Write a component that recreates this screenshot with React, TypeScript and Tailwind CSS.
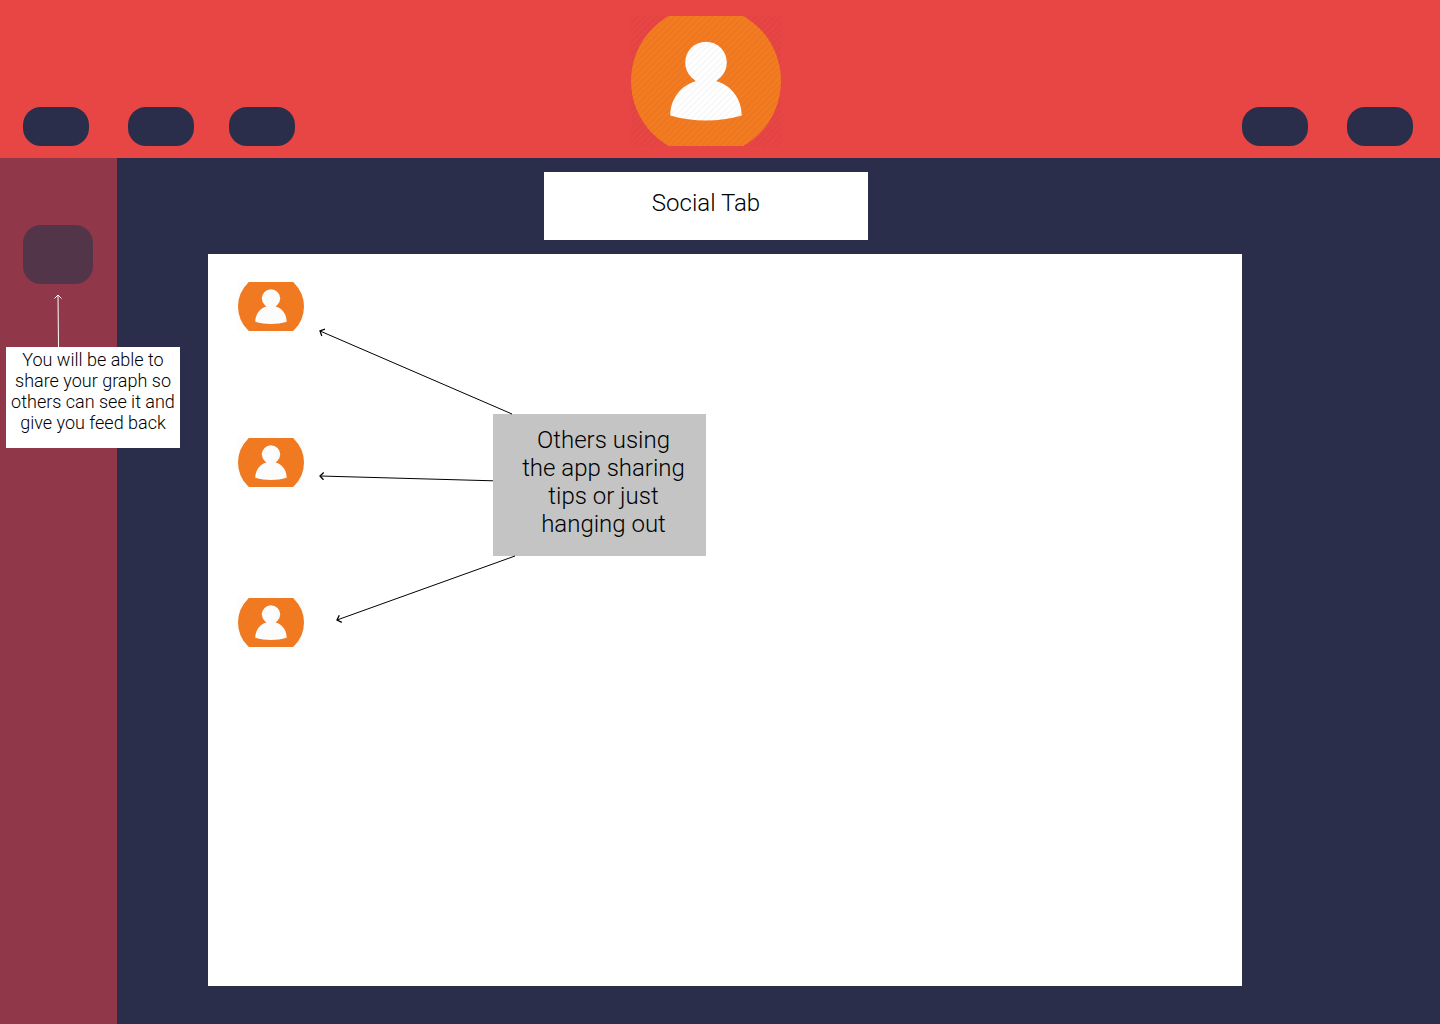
import { useId } from "react";

function Avatar({ className, label }: { className: string; label: string }) {
  const id = useId();
  return (
    <svg
      viewBox="0 0 150 130"
      preserveAspectRatio="xMidYMid slice"
      className={className}
      role="img"
      aria-label={label}
    >
      <defs>
        <pattern
          id={id}
          width="4.4"
          height="4.4"
          patternUnits="userSpaceOnUse"
          patternTransform="rotate(45)"
        >
          <rect width="1.6" height="4.4" fill="#000" fillOpacity="0.03" />
        </pattern>
      </defs>
      <circle cx="75" cy="65" r="75" fill="#f37b21" />
      <circle cx="75" cy="46.5" r="20.8" fill="#fff" />
      <path
        d="M39.3 99.5C39.3 83 50 69 64.8 65.2C63 63 62 62 61 61H89C88 62 87 63 85.4 65.2C100.3 69 110.7 83 110.7 99.5C99 103 87 104.5 75 104.5C63 104.5 51 103 39.3 99.5Z"
        fill="#fff"
      />
      <rect width="150" height="130" fill={`url(#${id})`} />
    </svg>
  );
}

function Pill({ label, className = "" }: { label: string; className?: string }) {
  return (
    <button
      type="button"
      aria-label={label}
      className={`h-[39px] w-[66px] shrink-0 rounded-[18px] bg-[#2b2e4a] ${className}`}
    />
  );
}

export default function App() {
  return (
    <div className="flex min-h-screen flex-col bg-[#2b2e4a] font-['Roboto',sans-serif] font-light text-black">
      <header className="grid grid-cols-[1fr_auto_1fr] items-end bg-[#e84545] pt-4 pr-[27px] pb-3">
        <nav aria-label="Primary" className="flex pl-[23px]">
          <Pill label="Home" />
          <Pill label="Graph" className="ml-[39px]" />
          <Pill label="Social" className="ml-[35px]" />
        </nav>
        <Avatar className="mr-px h-[130px] w-[150px]" label="Your profile" />
        <nav aria-label="Account" className="flex justify-end gap-[39px]">
          <Pill label="Settings" />
          <Pill label="Log out" />
        </nav>
      </header>

      <div className="flex grow">
        <aside className="z-10 w-[117px] shrink-0 bg-[#903749] pt-[67px]">
          <button
            type="button"
            aria-label="Share your graph"
            className="ml-[23px] block h-[59px] w-[70px] rounded-[18px] bg-[#53354a]"
          />
          <svg
            viewBox="0 0 10 53"
            className="mt-[10px] ml-[53px] block h-[53px] w-[10px]"
            fill="none"
            stroke="#fff"
            aria-hidden="true"
          >
            <path d="M5.5 53L5 1M1.5 4.5L5 1L8.5 4.5" />
          </svg>
          <p className="ml-[6px] w-[174px] bg-white px-1 pt-[2px] pb-[15px] text-center text-[18px] leading-[21px]">
            You will be able to share your graph so others can see it and give you feed back
          </p>
        </aside>

        <main className="flex grow flex-col pt-[14px] pb-[38px]">
          <div className="flex justify-center pr-[145px]">
            <h1 className="w-[324px] bg-white pt-[17px] pb-[23px] text-center text-[24px] leading-7">
              Social Tab
            </h1>
          </div>

          <section
            aria-label="Social"
            className="relative mt-[14px] mr-[198px] ml-[91px] flex grow items-start bg-white pt-7 pl-[30px]"
          >
            <ul className="flex flex-col">
              <li>
                <Avatar className="block h-[49px] w-[66px]" label="First member" />
              </li>
              <li className="mt-[107px]">
                <Avatar className="block h-[49px] w-[66px]" label="Second member" />
              </li>
              <li className="mt-[111px]">
                <Avatar className="block h-[49px] w-[66px]" label="Third member" />
              </li>
            </ul>
            <p className="mt-[132px] ml-[189px] w-[213px] bg-[#c4c4c4] pt-3 pr-[18px] pb-[18px] pl-[26px] text-center text-[24px] leading-7">
              Others using the app sharing tips or just hanging out
            </p>
            <svg
              viewBox="0 0 320 380"
              className="pointer-events-none absolute top-0 left-0 h-[380px] w-[320px]"
              fill="none"
              stroke="#000"
              aria-hidden="true"
            >
              <path d="M304 160L112 77M285 226.8L112 222M307 302L129 366" />
              <path
                d="M117 75.2L112 77L113.8 82M115.7 218.5L112 222L115.5 225.7M131.3 361.2L129 366L133.8 368.3"
                strokeWidth="1.3"
              />
            </svg>
          </section>
        </main>
      </div>
    </div>
  );
}
